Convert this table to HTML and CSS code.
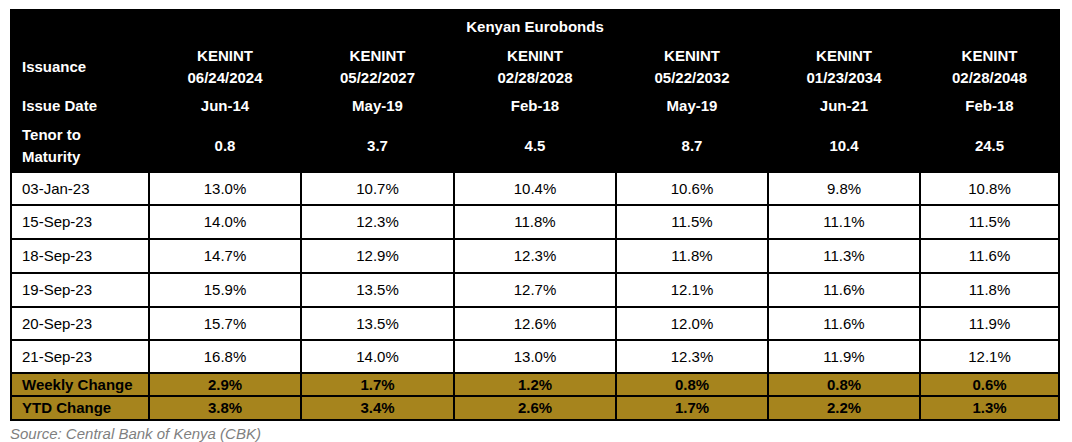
FILE: index.html
```html
<!DOCTYPE html>
<html lang="en">
<head>
<meta charset="utf-8">
<title>Kenyan Eurobonds</title>
<link rel="stylesheet" href="styles.css">
</head>
<body>
<div class="wrap">
<table class="bonds">
  <colgroup>
    <col class="c-label">
    <col class="c-a">
    <col class="c-b">
    <col class="c-c">
    <col class="c-d">
    <col class="c-e">
    <col class="c-f">
  </colgroup>
  <thead>
    <tr class="h-title"><th colspan="7">Kenyan Eurobonds</th></tr>
    <tr class="h-issuance">
      <th class="lbl">Issuance</th>
      <th>KENINT<br>06/24/2024</th>
      <th>KENINT<br>05/22/2027</th>
      <th>KENINT<br>02/28/2028</th>
      <th>KENINT<br>05/22/2032</th>
      <th>KENINT<br>01/23/2034</th>
      <th>KENINT<br>02/28/2048</th>
    </tr>
    <tr class="h-date">
      <th class="lbl">Issue Date</th>
      <th>Jun-14</th>
      <th>May-19</th>
      <th>Feb-18</th>
      <th>May-19</th>
      <th>Jun-21</th>
      <th>Feb-18</th>
    </tr>
    <tr class="h-tenor">
      <th class="lbl">Tenor to<br>Maturity</th>
      <th>0.8</th>
      <th>3.7</th>
      <th>4.5</th>
      <th>8.7</th>
      <th>10.4</th>
      <th>24.5</th>
    </tr>
  </thead>
  <tbody>
    <tr class="r33"><td class="lbl">03-Jan-23</td><td>13.0%</td><td>10.7%</td><td>10.4%</td><td>10.6%</td><td>9.8%</td><td>10.8%</td></tr>
    <tr class="r34"><td class="lbl">15-Sep-23</td><td>14.0%</td><td>12.3%</td><td>11.8%</td><td>11.5%</td><td>11.1%</td><td>11.5%</td></tr>
    <tr class="r34"><td class="lbl">18-Sep-23</td><td>14.7%</td><td>12.9%</td><td>12.3%</td><td>11.8%</td><td>11.3%</td><td>11.6%</td></tr>
    <tr class="r34"><td class="lbl">19-Sep-23</td><td>15.9%</td><td>13.5%</td><td>12.7%</td><td>12.1%</td><td>11.6%</td><td>11.8%</td></tr>
    <tr class="r33"><td class="lbl">20-Sep-23</td><td>15.7%</td><td>13.5%</td><td>12.6%</td><td>12.0%</td><td>11.6%</td><td>11.9%</td></tr>
    <tr class="r33"><td class="lbl">21-Sep-23</td><td>16.8%</td><td>14.0%</td><td>13.0%</td><td>12.3%</td><td>11.9%</td><td>12.1%</td></tr>
    <tr class="gold g23"><td class="lbl">Weekly Change</td><td>2.9%</td><td>1.7%</td><td>1.2%</td><td>0.8%</td><td>0.8%</td><td>0.6%</td></tr>
    <tr class="gold g24"><td class="lbl">YTD Change</td><td>3.8%</td><td>3.4%</td><td>2.6%</td><td>1.7%</td><td>2.2%</td><td>1.3%</td></tr>
  </tbody>
</table>
<p class="source">Source: Central Bank of Kenya (CBK)</p>
</div>
</body>
</html>
```

FILE: styles.css
```css
html, body {
  margin: 0;
  padding: 0;
  background: #ffffff;
}

body {
  font-family: "Liberation Sans", Arial, sans-serif;
  font-size: 15px;
  color: #000000;
}

.wrap {
  padding: 9px 0 0 10px;
}

.bonds {
  border-collapse: collapse;
  table-layout: fixed;
  width: 1050px;
}

.c-label { width: 138px; }
.c-a { width: 152px; }
.c-b { width: 153px; }
.c-c { width: 162px; }
.c-d { width: 152px; }
.c-e { width: 152px; }
.c-f { width: 139px; }

.bonds th,
.bonds td {
  border: 2px solid #000000;
  padding: 0 10px;
  text-align: center;
  vertical-align: middle;
  line-height: 22px;
  white-space: nowrap;
}

.bonds th {
  background: #000000;
  color: #ffffff;
  font-weight: bold;
}

.bonds .lbl {
  text-align: left;
}

.h-title { height: 33px; }
.h-issuance { height: 48px; }
.h-date { height: 29px; }
.h-tenor { height: 52px; }

.r33 { height: 33px; }
.r34 { height: 34px; }

.gold td {
  background: #a6841d;
  font-weight: bold;
  line-height: 18px;
}

.g23 { height: 23px; }
.g24 { height: 24px; }

.source {
  margin: 3px 0 0 0;
  font-style: italic;
  color: #7f7f7f;
  font-size: 15px;
  line-height: 20px;
}
```
